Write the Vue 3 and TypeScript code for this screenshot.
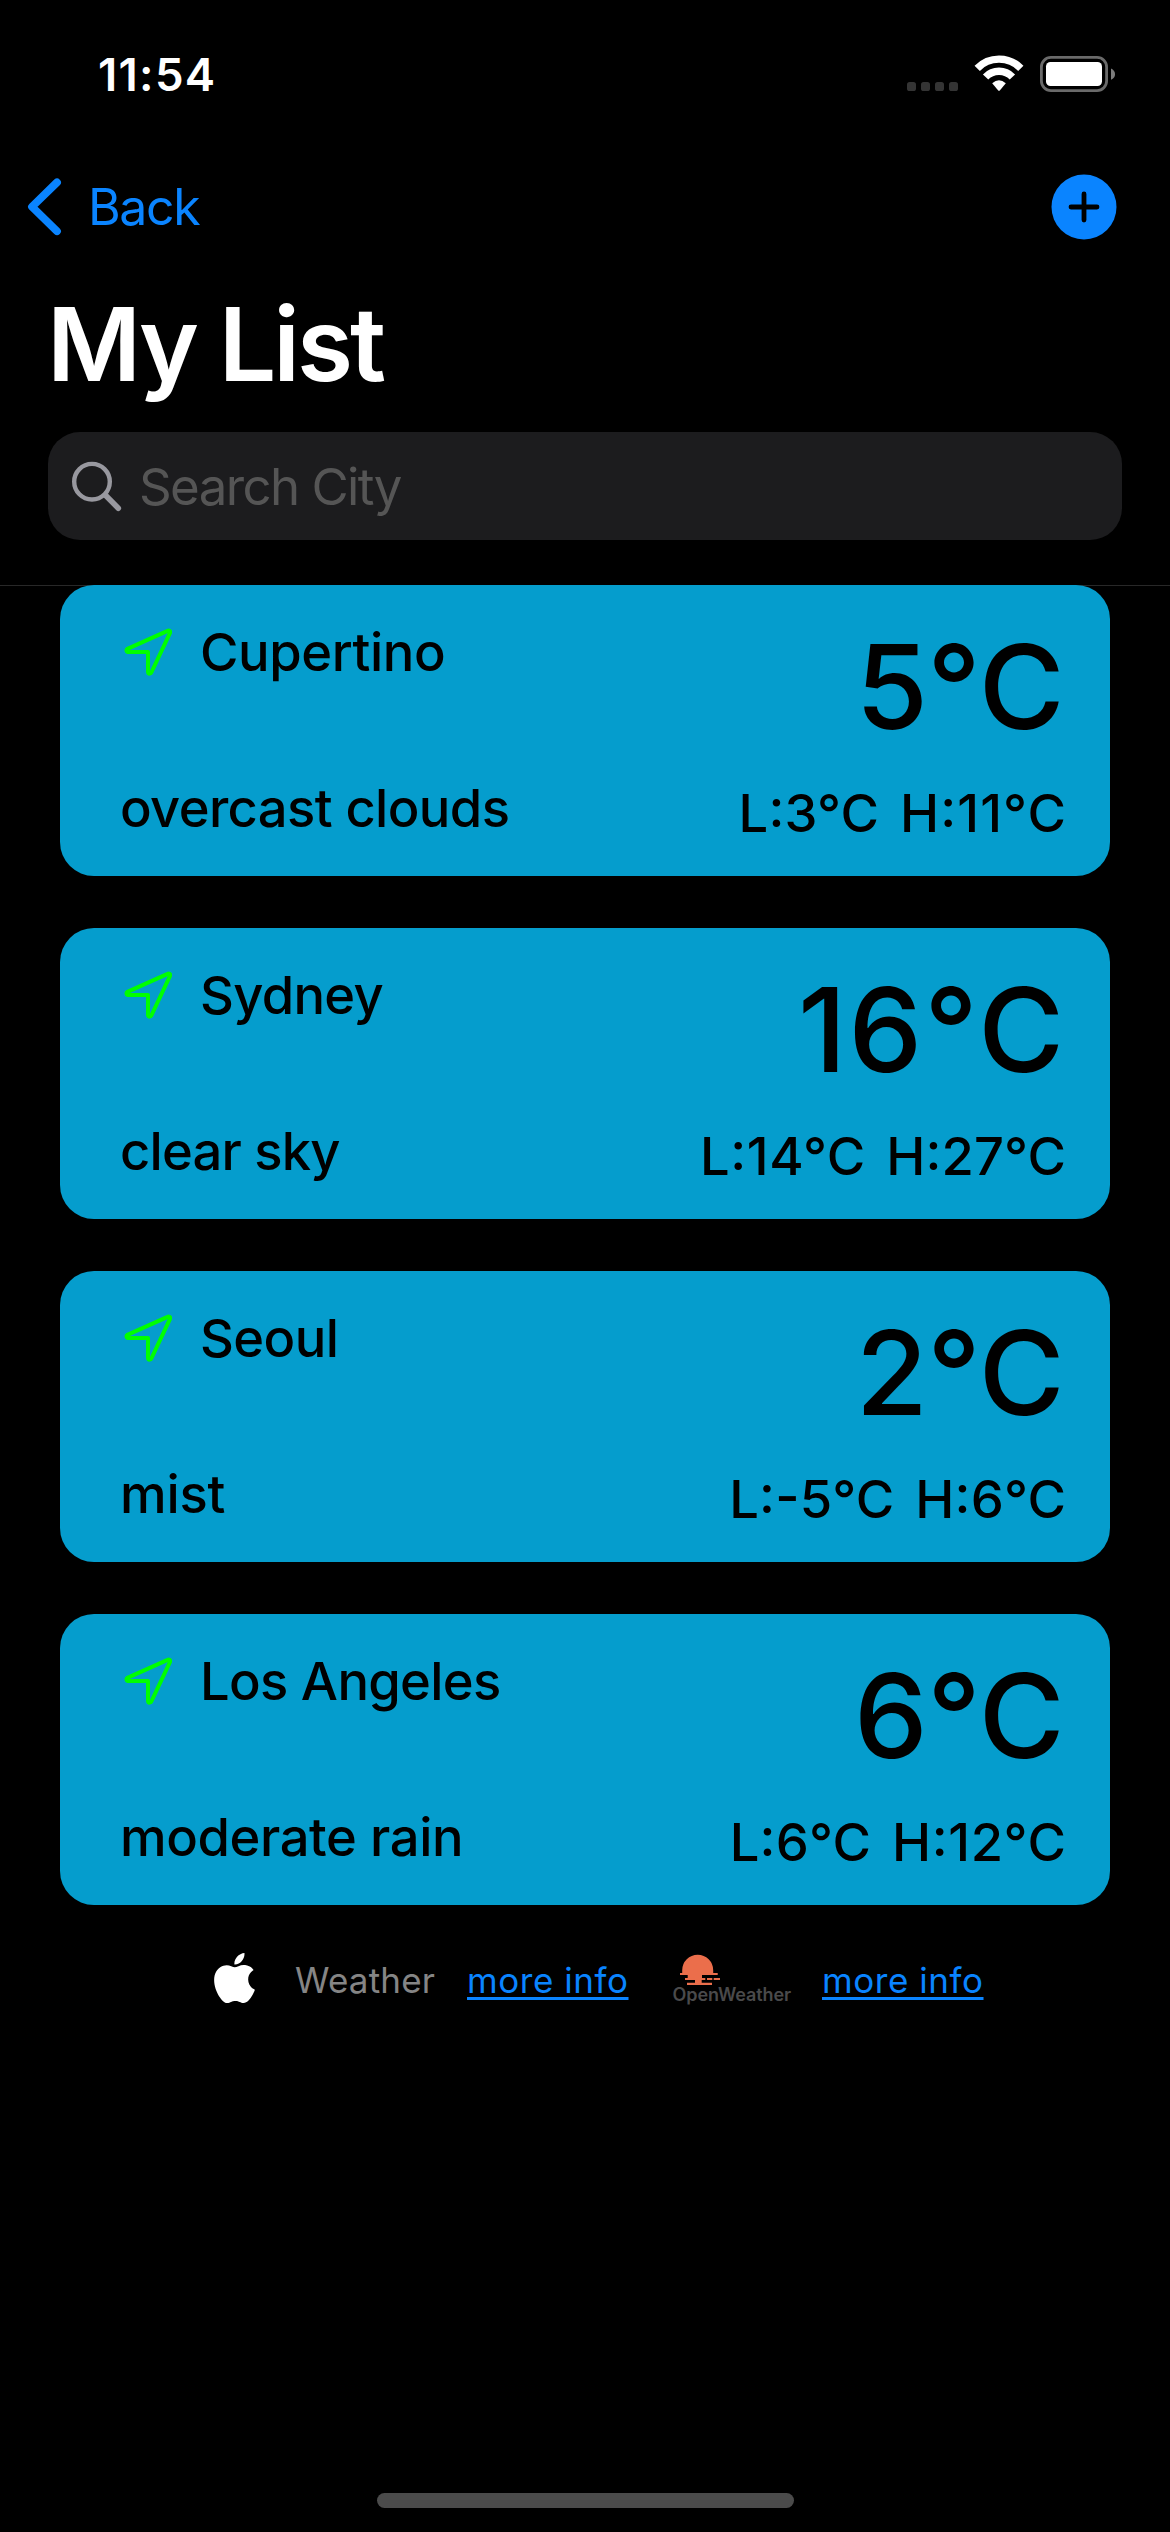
<script setup lang="ts">
interface Reading {
  text: string
  tracking: number
}

interface CityWeather {
  city: string
  cityTracking: number
  description: string
  descriptionTracking: number
  temperature: number
  low: Reading
  high: Reading
}

const cities: CityWeather[] = [
  {
    city: 'Cupertino',
    cityTracking: -0.4,
    description: 'overcast clouds',
    descriptionTracking: -0.6,
    temperature: 5,
    low: { text: 'L:3°C', tracking: 0.2 },
    high: { text: 'H:11°C', tracking: 1.1 },
  },
  {
    city: 'Sydney',
    cityTracking: -0.7,
    description: 'clear sky',
    descriptionTracking: -0.8,
    temperature: 16,
    low: { text: 'L:14°C', tracking: 0.6 },
    high: { text: 'H:27°C', tracking: 0.1 },
  },
  {
    city: 'Seoul',
    cityTracking: -0.6,
    description: 'mist',
    descriptionTracking: -0.2,
    temperature: 2,
    low: { text: 'L:-5°C', tracking: 0.2 },
    high: { text: 'H:6°C', tracking: 0.2 },
  },
  {
    city: 'Los Angeles',
    cityTracking: -0.7,
    description: 'moderate rain',
    descriptionTracking: -0.4,
    temperature: 6,
    low: { text: 'L:6°C', tracking: 0.2 },
    high: { text: 'H:12°C', tracking: 0.6 },
  },
]

const track = (px: number) => ({ letterSpacing: `${px}px`, marginRight: `${-px}px` })
</script>

<template>
  <main class="screen">
    <div class="status-bar">
      <span class="time">11:54</span>
      <svg class="status-icons" width="220" height="45" viewBox="0 0 220 45">
        <g fill="#343434">
          <rect x="7" y="30" width="9" height="9" rx="2.6" />
          <rect x="21" y="30" width="9" height="9" rx="2.6" />
          <rect x="35" y="30" width="9" height="9" rx="2.6" />
          <rect x="49" y="30" width="9" height="9" rx="2.6" />
        </g>
        <g fill="none" stroke="#fff" stroke-width="7.4">
          <path d="M77.2 16.3A30.5 30.5 0 0 1 120.8 16.3" />
          <path d="M85.6 25A18.6 18.6 0 0 1 112.4 25" />
        </g>
        <path d="M92.2 31.2Q99 25.4 105.8 31.2L100 38.2Q99 39.2 98 38.2Z" fill="#fff" />
        <rect x="141.4" y="5.4" width="65.2" height="33.2" rx="9.5" fill="none" stroke="#6a6a6a" stroke-width="2.8" />
        <rect x="146" y="10" width="56" height="24" rx="4.5" fill="#fff" />
        <path d="M211 16.4C216.4 18.6 216.4 25.6 211 27.8Z" fill="#7c7c7c" />
      </svg>
    </div>

    <nav class="nav-bar">
      <a class="back">
        <svg width="40" height="60" viewBox="0 0 40 60">
          <path d="M33 5.4L8 29.8L33 54.2" fill="none" stroke="#0a84ff" stroke-width="7.8" stroke-linecap="round" stroke-linejoin="round" />
        </svg>
        <span>Back</span>
      </a>
      <svg class="add" width="66" height="66" viewBox="0 0 66 66">
        <circle cx="33" cy="33" r="32.5" fill="#0a84ff" />
        <path d="M33 20V46M20 33H46" stroke="#000" stroke-width="4.8" stroke-linecap="round" />
      </svg>
    </nav>

    <h1 class="title">My List</h1>

    <div class="search">
      <svg width="52" height="52" viewBox="0 0 52 52">
        <g fill="none" stroke="#98989f" stroke-linecap="round">
          <circle cx="22" cy="21.7" r="17.8" stroke-width="4.4" />
          <path d="M35.5 35.2L48.3 48.2" stroke-width="5.6" />
        </g>
      </svg>
      <span>Search City</span>
    </div>

    <section class="list">
      <article v-for="item in cities" :key="item.city" class="card">
        <div class="place">
          <div class="city">
            <svg width="48" height="48" viewBox="0 0 48 48">
              <path
                d="M3.6 24H24V44Q24.4 45.8 25.8 45.6Q27 45.4 27.6 44L45.9 5.2Q46.6 3.4 45.4 2.7Q44.6 2.3 43.6 2.8L3.4 20.8Q2.4 21.4 2.5 22.6Q2.7 23.8 3.6 24Z"
                fill="none"
                stroke="#0f0"
                stroke-width="4"
                stroke-linejoin="round"
              />
            </svg>
            <span :style="track(item.cityTracking)">{{ item.city }}</span>
          </div>
          <div class="description"><span :style="track(item.descriptionTracking)">{{ item.description }}</span></div>
        </div>
        <div class="reading">
          <div class="temperature" :class="{ double: item.temperature > 9 }">{{ item.temperature }}°C</div>
          <div class="range">
            <span :style="track(item.low.tracking)">{{ item.low.text }}</span>
            <span :style="track(item.high.tracking)">{{ item.high.text }}</span>
          </div>
        </div>
      </article>
    </section>

    <footer class="credits">
      <svg class="apple" width="41" height="50" viewBox="2.2 0 19.6 24">
        <path
          fill="#fff"
          d="M12.152 6.896c-.948 0-2.415-1.078-3.96-1.04-2.04.027-3.91 1.183-4.961 3.014-2.117 3.675-.546 9.103 1.519 12.09 1.013 1.454 2.208 3.09 3.792 3.039 1.52-.065 2.09-.987 3.935-.987 1.831 0 2.35.987 3.96.948 1.637-.026 2.676-1.48 3.676-2.948 1.156-1.688 1.636-3.325 1.662-3.415-.039-.013-3.182-1.221-3.22-4.857-.026-3.04 2.48-4.494 2.597-4.559-1.429-2.09-3.623-2.324-4.39-2.376-2-.156-3.675 1.09-4.61 1.09zM15.53 3.83c.843-1.012 1.4-2.427 1.245-3.83-1.207.052-2.662.805-3.532 1.818-.78.896-1.454 2.338-1.273 3.714 1.338.104 2.715-.688 3.559-1.701"
        />
      </svg>
      <span class="weather">Weather</span>
      <a class="link">more info</a>
      <svg class="open-weather" width="135" height="60" viewBox="0 0 135 60">
        <g fill="#eb6e4b">
          <path d="M17.2 23V20.2A15.5 15.5 0 0 1 48.2 20.2V23H52.7V25H37V28H40.3V30H36.7V32.7H47V35H22V32.7H30V30H20V28H22.7V25H15V23Z" />
          <rect x="42" y="28" width="5.3" height="2" />
          <rect x="48.7" y="28" width="6.3" height="2" />
        </g>
        <text x="7.6" y="51" class="brand">OpenWeather</text>
      </svg>
      <a class="link">more info</a>
    </footer>

    <div class="home-indicator"></div>
  </main>
</template>

<style>
body {
  margin: 0;
  background: #000;
}
</style>

<style scoped>
.screen {
  display: flex;
  flex-direction: column;
  width: 1170px;
  height: 2532px;
  overflow: hidden;
  background: #000;
  color: #fff;
  font-family: Inter, 'Liberation Sans', sans-serif;
}

svg {
  display: block;
  flex: none;
}

.status-bar {
  display: flex;
  flex: none;
  align-items: center;
  justify-content: space-between;
  height: 149px;
  padding: 0 50px 0 98px;
}

.time {
  font-size: 45.5px;
  font-weight: 600;
  letter-spacing: 1.3px;
}

.nav-bar {
  display: flex;
  flex: none;
  align-items: center;
  justify-content: space-between;
  height: 116px;
  padding: 0 53px 0 24px;
}

.back {
  display: flex;
  align-items: center;
  gap: 24px;
  color: #0a84ff;
  font-size: 50px;
  letter-spacing: -1.4px;
}

.title {
  flex: none;
  margin: 0;
  padding-left: 47px;
  font-size: 102px;
  font-weight: 600;
  line-height: 158px;
  letter-spacing: -3px;
}

.search {
  display: flex;
  flex: none;
  align-items: center;
  gap: 17px;
  height: 108px;
  margin: 9px 48px 45px;
  padding-left: 22px;
  border-radius: 32px;
  background: #1c1c1e;
  color: #555;
  font-size: 51px;
  letter-spacing: -1.6px;
  box-sizing: border-box;
}

.list {
  display: flex;
  flex: none;
  flex-direction: column;
  gap: 52px;
  padding: 0 60px;
  background: linear-gradient(#282828, #282828) top / 100% 1px no-repeat;
}

.card {
  display: flex;
  justify-content: space-between;
  height: 291px;
  padding: 0 44px 0 60px;
  border-radius: 34px;
  background: #059dcd;
  color: #000;
  font-size: 52.5px;
  font-weight: 500;
  line-height: 64px;
  white-space: nowrap;
  box-sizing: border-box;
}

.place,
.reading {
  display: flex;
  flex-direction: column;
  justify-content: space-between;
}

.place {
  padding: 35px 0 36px;
}

.city {
  display: flex;
  align-items: center;
  gap: 28px;
  padding-left: 4px;
}

.reading {
  align-items: flex-end;
  padding: 42px 0 31px;
}

.temperature {
  padding-right: 2px;
  font-size: 117px;
  line-height: 120px;
  letter-spacing: -0.5px;
}

.temperature.double {
  padding-right: 0;
  letter-spacing: 2px;
}

.range {
  display: flex;
  gap: 21px;
  font-feature-settings: 'case';
}

.credits {
  display: flex;
  flex: none;
  align-items: center;
  height: 150px;
  padding-left: 214px;
  font-size: 35px;
}

.apple {
  margin-top: -4px;
}

.weather {
  width: 172px;
  margin-left: 40px;
  color: #858585;
  letter-spacing: 0.2px;
}

.link {
  width: 162px;
  color: #0a84ff;
  letter-spacing: 0.55px;
  text-decoration: underline;
  text-decoration-thickness: 3px;
  text-underline-offset: 4px;
}

.open-weather {
  margin: 0 22px 0 36px;
}

.brand {
  fill: #4a4a4b;
  font-size: 18px;
  font-weight: 600;
  letter-spacing: -0.1px;
}

.home-indicator {
  flex: none;
  width: 417px;
  height: 15px;
  margin: auto auto 24px;
  border-radius: 8px;
  background: #4b4b4b;
}
</style>
